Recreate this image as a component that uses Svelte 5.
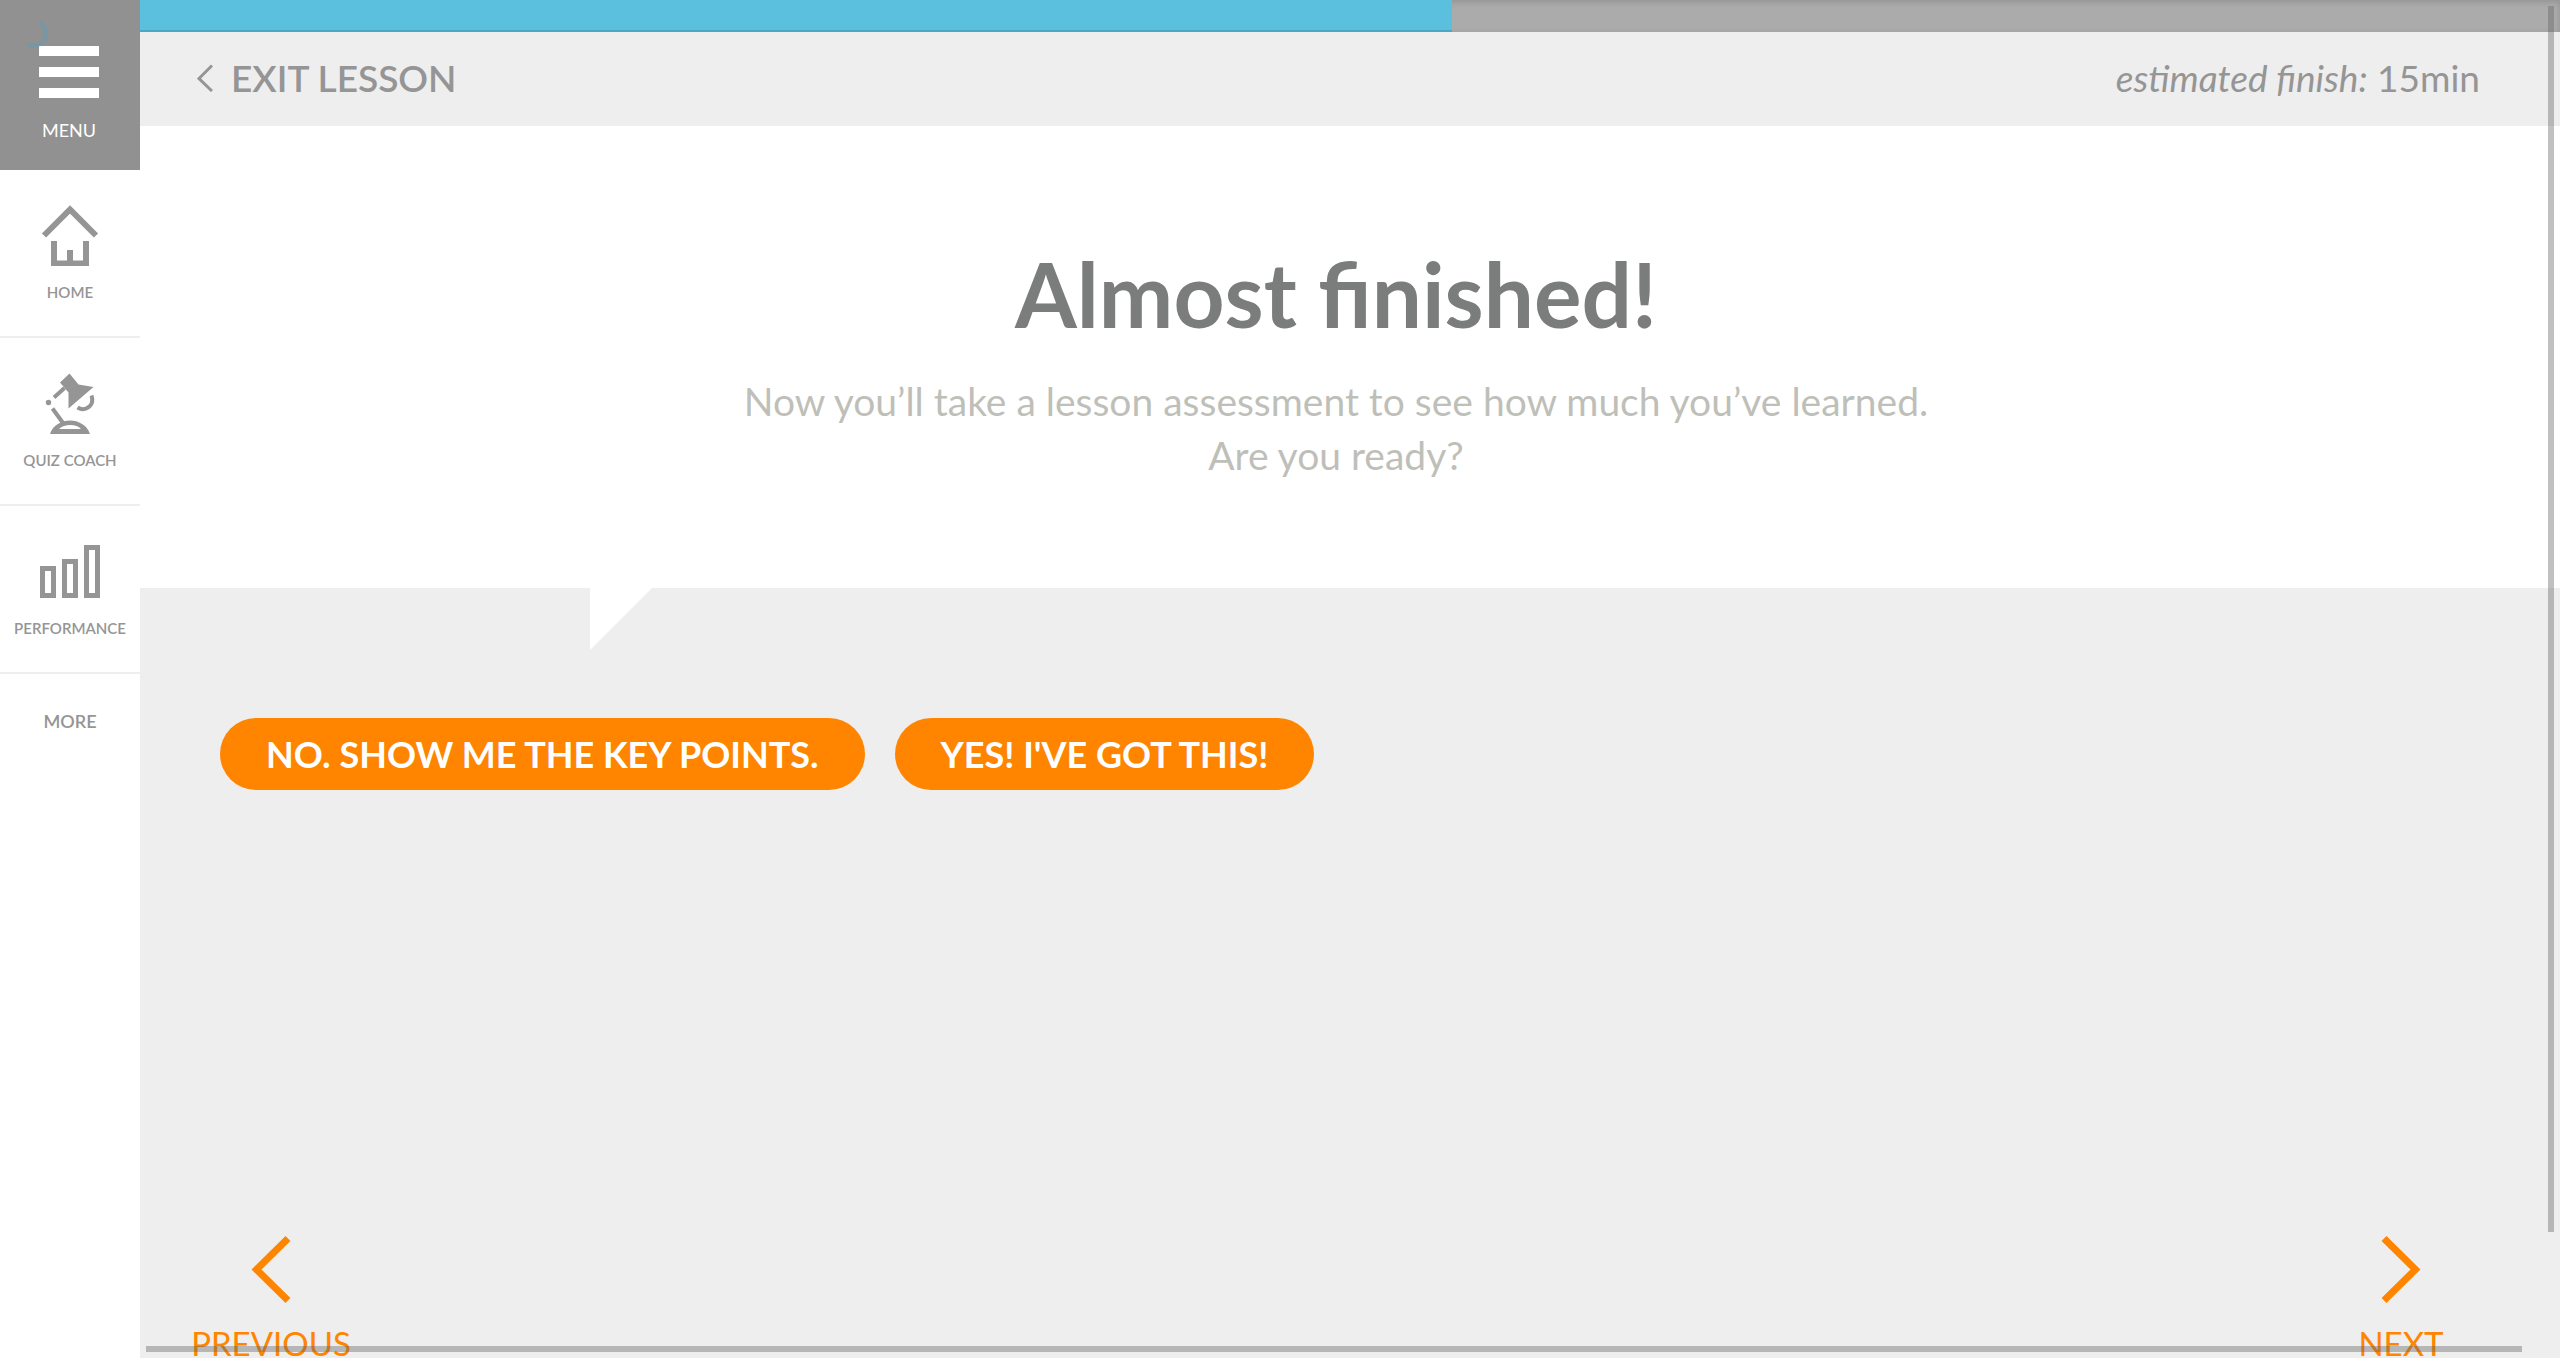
<script>
  const progress = 54.2;
</script>

<div class="app">
  <aside class="sidebar">
    <button class="menu" type="button">
      <svg class="spinner" width="24" height="28" viewBox="0 0 24 28" aria-hidden="true">
        <path d="M13 2A11.500 11.500 0 0 1 1 23" />
      </svg>
      <svg width="60" height="52" viewBox="0 0 60 52" aria-hidden="true">
        <path fill="#fff" d="M0 0h60v10H0zM0 21h60v10H0zM0 42h60v10H0z" />
      </svg>
      <span>MENU</span>
    </button>
    <nav class="links" aria-label="Main">
      <a class="item" href="#home">
        <svg width="64" height="64" viewBox="0 0 64 64" aria-hidden="true">
          <path d="M6 33.500 32 7.500 58 33.500M16 39v22.500h32V39M32 48v14" fill="none" stroke="#959595" stroke-width="6" />
        </svg>
        <span>HOME</span>
      </a>
      <a class="item" href="#quiz-coach">
        <svg width="64" height="64" viewBox="0 0 64 64" aria-hidden="true">
          <g fill="#959595">
            <path d="M31.500 3.500 22 12.500 30.500 22.500V38.500L55.500 17 40.500 14.500Z" />
            <circle cx="10.500" cy="32.500" r="2.700" />
            <path fill-rule="evenodd" d="M12 64C18 46 46 46 52 64ZM21 59H43C39 53.500 26 53.500 21 59Z" />
          </g>
          <path d="M16 27.500 26.500 18M14.500 38.500 25 53M53.500 25.500C57 36 47 42 39.500 37.500" fill="none" stroke="#959595" stroke-width="4" />
        </svg>
        <span>QUIZ COACH</span>
      </a>
      <a class="item" href="#performance">
        <svg width="64" height="64" viewBox="0 0 64 64" aria-hidden="true">
          <path d="M4.500 30.500h11v27h-11zM26.500 23.500h11v34h-11zM48.500 9.500h11v48h-11z" fill="none" stroke="#959595" stroke-width="5" />
        </svg>
        <span>PERFORMANCE</span>
      </a>
      <a class="more" href="#more">MORE</a>
    </nav>
  </aside>

  <div class="page">
    <div class="track" role="progressbar" aria-label="Lesson progress" aria-valuenow={progress} aria-valuemin="0" aria-valuemax="100">
      <div class="fill" style:width="{progress}%"></div>
    </div>
    <header class="bar">
      <a class="exit" href="#exit">
        <svg width="16" height="28" viewBox="0 0 16 28" aria-hidden="true">
          <path d="M15 1.500 2 14.500 15 27" fill="none" stroke="#959595" stroke-width="3" />
        </svg>
        <span>EXIT LESSON</span>
      </a>
      <p class="estimate"><em>estimated finish:</em> 15min</p>
    </header>
    <section class="prompt">
      <h1>Almost finished!</h1>
      <p>Now you’ll take a lesson assessment to see how much you’ve learned.<br />Are you ready?</p>
    </section>
    <main class="answers">
      <div class="choices">
        <button type="button">NO. SHOW ME THE KEY POINTS.</button>
        <button type="button">YES! I'VE GOT THIS!</button>
      </div>
      <nav class="pager" aria-label="Lesson pages">
        <a href="#previous">
          <svg width="40" height="68" viewBox="0 0 40 68" aria-hidden="true">
            <path d="M37 2.500 5.500 33.500 37 64.500" />
          </svg>
          <span>PREVIOUS</span>
        </a>
        <a href="#next">
          <svg width="40" height="68" viewBox="0 0 40 68" aria-hidden="true">
            <path d="M3 2.500 34.500 33.500 3 64.500" />
          </svg>
          <span>NEXT</span>
        </a>
      </nav>
    </main>
    <div class="scroll-y"></div>
    <div class="scroll-x"></div>
  </div>
</div>

<style>
  :global(body) {
    margin: 0;
    background: #fff;
  }

  .app {
    display: flex;
    height: 100vh;
    overflow: hidden;
    font-family: Lato, "Open Sans", sans-serif;
    color: #959595;
  }

  a {
    color: inherit;
    text-decoration: none;
  }

  svg {
    display: block;
  }

  button {
    border: 0;
    font-family: inherit;
    color: #fff;
    cursor: pointer;
  }

  .sidebar {
    flex: 0 0 140px;
    background: #fff;
  }

  .menu {
    position: relative;
    box-sizing: border-box;
    display: flex;
    flex-direction: column;
    align-items: center;
    gap: 20px;
    width: 100%;
    height: 170px;
    padding: 46px 2px 0 0;
    background: #919191;
    font-size: 18px;
    line-height: 24px;
  }

  .spinner {
    position: absolute;
    top: 21px;
    left: 27px;
  }

  .spinner path {
    fill: none;
    stroke: #5b9db6;
    stroke-opacity: 0.5;
    stroke-width: 4;
  }

  .item {
    box-sizing: border-box;
    display: flex;
    flex-direction: column;
    align-items: center;
    gap: 16px;
    height: 168px;
    padding-top: 32px;
    border-bottom: 2px solid #eee;
    font-size: 15px;
    font-weight: 600;
    line-height: 20px;
  }

  .more {
    display: block;
    padding-top: 35px;
    text-align: center;
    font-size: 18px;
    font-weight: 600;
    line-height: 24px;
  }

  .page {
    position: relative;
    flex: 1;
    min-width: 0;
    display: flex;
    flex-direction: column;
  }

  .track {
    height: 32px;
    background: #ababab;
    box-shadow: inset 0 2px 6px rgba(0, 0, 0, 0.15);
  }

  .fill {
    height: 100%;
    background: #5bc0de;
    box-shadow: inset 0 -2px 0 #4ca7c3;
  }

  .bar {
    box-sizing: border-box;
    display: flex;
    align-items: center;
    justify-content: space-between;
    height: 94px;
    padding: 0 80px 3px 57px;
    background: #eee;
    font-size: 37px;
    line-height: 48px;
  }

  .exit {
    display: flex;
    align-items: center;
    gap: 18px;
    font-weight: 600;
  }

  .estimate {
    margin: 0;
  }

  .prompt {
    box-sizing: border-box;
    height: 462px;
    padding: 108px 28px 0 0;
    background: #fff;
    text-align: center;
  }

  h1 {
    margin: 0 0 20px;
    font-size: 89px;
    line-height: 120px;
    color: #7b7c7c;
  }

  .prompt p {
    margin: 0;
    font-size: 39px;
    line-height: 54px;
    color: #bfbfba;
  }

  .answers {
    position: relative;
    flex: 1;
    display: flex;
    flex-direction: column;
    justify-content: space-between;
    padding: 130px 80px 0;
    background: #eee;
  }

  .answers::before {
    content: "";
    position: absolute;
    top: 0;
    left: 450px;
    width: 62px;
    height: 62px;
    background: #fff;
    clip-path: polygon(0 0, 100% 0, 0 100%);
  }

  .choices {
    display: flex;
    flex-wrap: wrap;
    gap: 30px;
  }

  .choices button {
    height: 72px;
    padding: 0 46px;
    border-radius: 36px;
    background: #ff8400;
    font-size: 36px;
    font-weight: 700;
    line-height: 40px;
  }

  .pager {
    display: flex;
    justify-content: space-between;
    margin: 0 -31px 0 -59px;
    color: #ff8400;
  }

  .pager a {
    display: flex;
    flex-direction: column;
    align-items: center;
    gap: 24px;
    width: 220px;
    font-size: 33px;
    line-height: 30px;
  }

  .pager path {
    fill: none;
    stroke: #ff8400;
    stroke-width: 7;
  }

  .scroll-y,
  .scroll-x {
    position: absolute;
    background: rgba(98, 98, 98, 0.4);
  }

  .scroll-y {
    top: 6px;
    right: 6px;
    bottom: 126px;
    width: 6px;
  }

  .scroll-x {
    right: 38px;
    bottom: 6px;
    left: 6px;
    height: 6px;
  }
</style>
